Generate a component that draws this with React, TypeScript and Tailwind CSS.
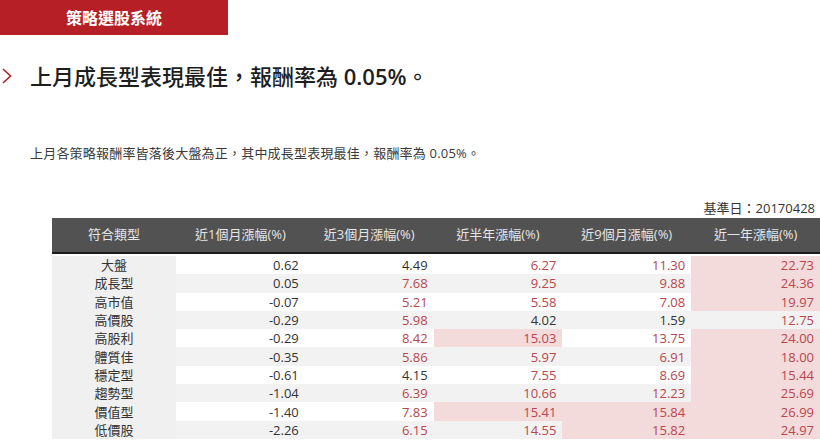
type Row = { name: string; values: number[] };

const rows: Row[] = [
  { name: "大盤", values: [0.62, 4.49, 6.27, 11.3, 22.73] },
  { name: "成長型", values: [0.05, 7.68, 9.25, 9.88, 24.36] },
  { name: "高市值", values: [-0.07, 5.21, 5.58, 7.08, 19.97] },
  { name: "高價股", values: [-0.29, 5.98, 4.02, 1.59, 12.75] },
  { name: "高股利", values: [-0.29, 8.42, 15.03, 13.75, 24.0] },
  { name: "體質佳", values: [-0.35, 5.86, 5.97, 6.91, 18.0] },
  { name: "穩定型", values: [-0.61, 4.15, 7.55, 8.69, 15.44] },
  { name: "趨勢型", values: [-1.04, 6.39, 10.66, 12.23, 25.69] },
  { name: "價值型", values: [-1.4, 7.83, 15.41, 15.84, 26.99] },
  { name: "低價股", values: [-2.26, 6.15, 14.55, 15.82, 24.97] },
];

const headers = [
  "符合類型",
  "近1個月漲幅(%)",
  "近3個月漲幅(%)",
  "近半年漲幅(%)",
  "近9個月漲幅(%)",
  "近一年漲幅(%)",
];

const font = "font-['Open_Sans','Noto_Sans_CJK_TC',sans-serif]";

function Cell({ value, striped }: { value: number; striped: boolean }) {
  // red text above 5%, pink highlight above 15%
  const bg = value > 15 ? "bg-[#f3dadb]" : striped ? "bg-[#f2f2f2]" : "bg-white";
  const color = value > 5 ? "text-[#b9464d]" : "text-[#333333]";
  return (
    <div className={`${bg} ${color} flex items-center justify-end pr-[6px]`}>
      {value.toFixed(2)}
    </div>
  );
}

export default function App() {
  return (
    <div lang="zh-Hant-TW" className={`w-[820px] h-[440px] overflow-hidden bg-white ${font}`}>
      {/* Tab */}
      <div className="w-[228px] h-[35px] bg-[#b51f25] flex items-center justify-center text-white text-[16px] font-bold">
        策略選股系統
      </div>

      {/* Heading */}
      <div className="mt-[26px] flex items-center h-[30px]">
        <svg width="14" height="18" viewBox="0 0 14 18">
          <polyline
            points="3,2 10.5,9 3,16"
            fill="none"
            stroke="#b51f25"
            strokeWidth="1.6"
          />
        </svg>
        <h1 className="ml-[16px] text-[22px] font-medium text-[#1e1e1e] leading-[30px]">
          上月成長型表現最佳，報酬率為 <span className="font-semibold">0.05%</span>。
        </h1>
      </div>

      {/* Summary */}
      <p className="mt-[52px] ml-[30px] text-[13px] leading-[20px] tracking-[0.2px] text-[#3a3a3a]">
        上月各策略報酬率皆落後大盤為正，其中成長型表現最佳，報酬率為 0.05%。
      </p>

      <div className="mt-[36px] pr-[5px] text-right text-[13px] leading-[18px] text-[#333333]">
        基準日：20170428
      </div>

      {/* Table */}
      <div className="mt-[1px] ml-[52px] w-[768px] text-[13px]">
        <div className="grid grid-cols-[124px_repeat(5,1fr)] h-[36px] bg-[#525252] border-b-2 border-[#1c1c1c] text-[#e6e6e6]">
          {headers.map((h) => (
            <div key={h} className="flex items-center justify-center">
              {h}
            </div>
          ))}
        </div>
        <div className="pt-[2px]">
          {rows.map((r, i) => (
            <div
              key={r.name}
              className="grid grid-cols-[124px_repeat(5,1fr)] h-[18.3px] leading-[18px]"
            >
              <div className="bg-[#f0f0f0] text-[#333333] flex items-center justify-center">
                {r.name}
              </div>
              {r.values.map((v, j) => (
                <Cell key={j} value={v} striped={i % 2 === 1} />
              ))}
            </div>
          ))}
        </div>
      </div>
    </div>
  );
}
